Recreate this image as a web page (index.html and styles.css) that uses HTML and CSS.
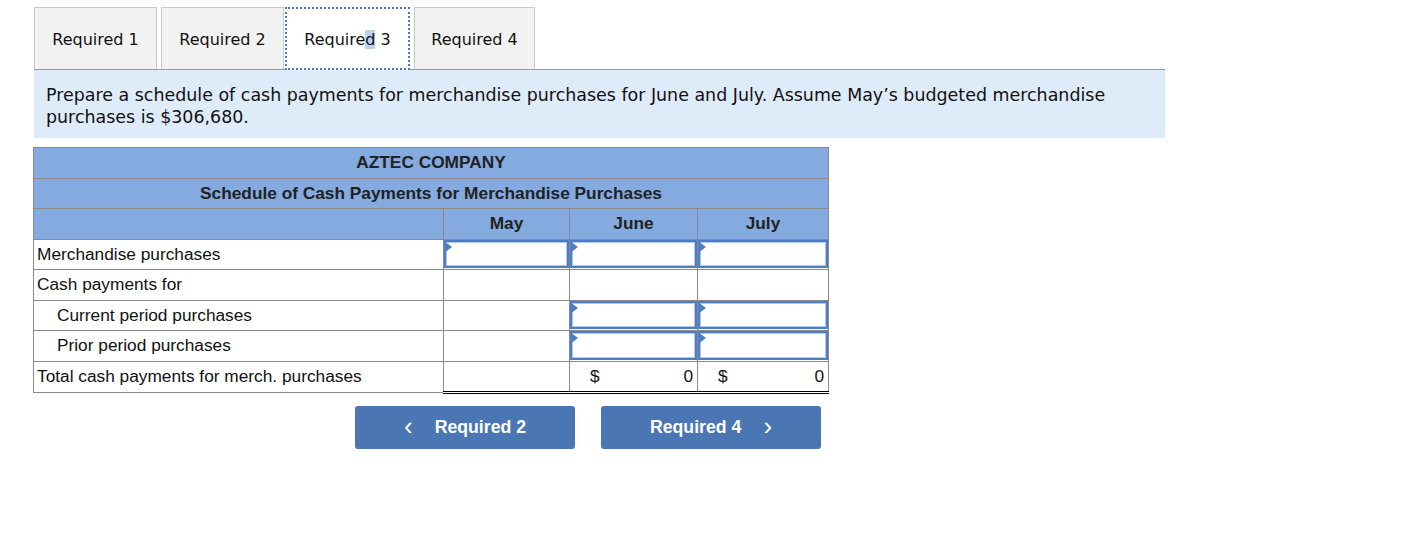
FILE: index.html
```html
<!DOCTYPE html>
<html>
<head>
<meta charset="utf-8">
<link rel="stylesheet" href="styles.css">
</head>
<body>
<div class="page">
  <div class="tabs">
    <div class="tab"><span>Required 1</span></div>
    <div class="tab"><span>Required 2</span></div>
    <div class="tab active"><span>Require<span class="sel">d</span> 3</span></div>
    <div class="tab"><span>Required 4</span></div>
  </div>
  <div class="instr">Prepare a schedule of cash payments for merchandise purchases for June and July. Assume May’s budgeted merchandise purchases is $306,680.</div>
  <table class="sched">
    <colgroup>
      <col class="c-label"><col class="c-may"><col class="c-june"><col class="c-july">
    </colgroup>
    <tr class="hd"><th colspan="4">AZTEC COMPANY</th></tr>
    <tr class="hd"><th colspan="4">Schedule of Cash Payments for Merchandise Purchases</th></tr>
    <tr class="hd"><th></th><th>May</th><th>June</th><th>July</th></tr>
    <tr>
      <td class="lbl">Merchandise purchases</td>
      <td class="inp"><div class="box"></div></td>
      <td class="inp"><div class="box"></div></td>
      <td class="inp"><div class="box"></div></td>
    </tr>
    <tr>
      <td class="lbl">Cash payments for</td>
      <td></td><td></td><td></td>
    </tr>
    <tr class="topblack">
      <td class="lbl ind">Current period purchases</td>
      <td></td>
      <td class="inp"><div class="box"></div></td>
      <td class="inp"><div class="box"></div></td>
    </tr>
    <tr>
      <td class="lbl ind">Prior period purchases</td>
      <td></td>
      <td class="inp"><div class="box"></div></td>
      <td class="inp"><div class="box"></div></td>
    </tr>
    <tr class="topblack total">
      <td class="lbl">Total cash payments for merch. purchases</td>
      <td class="dbl"></td>
      <td class="dbl"><div class="amt"><span>$</span><span>0</span></div></td>
      <td class="dbl"><div class="amt"><span>$</span><span>0</span></div></td>
    </tr>
  </table>
  <div class="nav">
    <div class="btn"><span class="chev">&lsaquo;</span><span>Required 2</span></div>
    <div class="btn"><span>Required 4</span><span class="chev">&rsaquo;</span></div>
  </div>
</div>
</body>
</html>
```
FILE: styles.css
```css
html, body { margin: 0; padding: 0; background: #fff; }
.page { padding: 7px 0 0 34px; width: 1131px; }
.tabs { display: flex; gap: 4px; height: 62px; border-bottom: 1px solid #9a9a9a; }
.tab {
  box-sizing: border-box; width: 123px; height: 62px; padding-top: 2px;
  display: flex; align-items: center; justify-content: center;
  background: #f2f2f2; border: 1px solid #c9c9c9; border-bottom: none;
  font-family: "DejaVu Sans", Verdana, sans-serif; font-size: 16px; color: #111;
}
.tab:nth-child(4) { width: 121px; }
.tab.active {
  background: #fff; border: 2px dotted #4a78bf; height: 63px; margin-bottom: -1px;
  width: 125px; margin-left: -3px;
}
.sel { background: #b8d2f0; }
.instr {
  background: #deebf8; padding: 14px 12px 10px 12px; height: 44px;
  font-family: "DejaVu Sans", Verdana, sans-serif; font-size: 17.45px; line-height: 22px; color: #111;
}
.sched {
  margin: 9px 0 0 -1px; border-collapse: collapse; width: 795px; table-layout: fixed;
  font-family: "Liberation Sans", Arial, sans-serif; font-size: 17.3px; color: #111;
}
.c-label { width: 410px; } .c-may { width: 126px; } .c-june { width: 128px; } .c-july { width: 131px; }
.sched th, .sched td { border: 1px solid #8a8a8a; height: 29.5px; padding: 0; }
.hd th { background: #84aadf; font-weight: bold; color: #222; text-align: center; }
.lbl { padding-left: 3px !important; }
.ind { padding-left: 23px !important; }
.topblack td:not(.lbl) { border-top: 1px solid #000; }
.total td.dbl { border-bottom: 3px double #000; }
.inp { position: relative; }
.box {
  position: absolute; left: 0; right: 0; top: 0; bottom: 1px;
  border: 2px solid #4f7dc3; box-shadow: inset 0 0 0 1px #b0c8ec; background: #fff;
}
.box::before {
  content: ""; position: absolute; left: -2px; top: -1px;
  border-left: 8px solid #4f7dc3; border-top: 6px solid transparent; border-bottom: 6px solid transparent;
}
.amt { display: flex; justify-content: space-between; padding: 0 4px 0 20px; }
.nav { display: flex; gap: 26px; margin: 12px 0 0 321px; }
.btn {
  width: 220px; height: 43px; background: #4a76b4; border-radius: 3px; color: #fff;
  display: flex; align-items: center; justify-content: center; gap: 22px;
  font-family: "Liberation Sans", Arial, sans-serif; font-weight: bold; font-size: 17.7px;
}
.chev { font-size: 26px; font-weight: normal; line-height: 1; margin-top: -3px; }
```
